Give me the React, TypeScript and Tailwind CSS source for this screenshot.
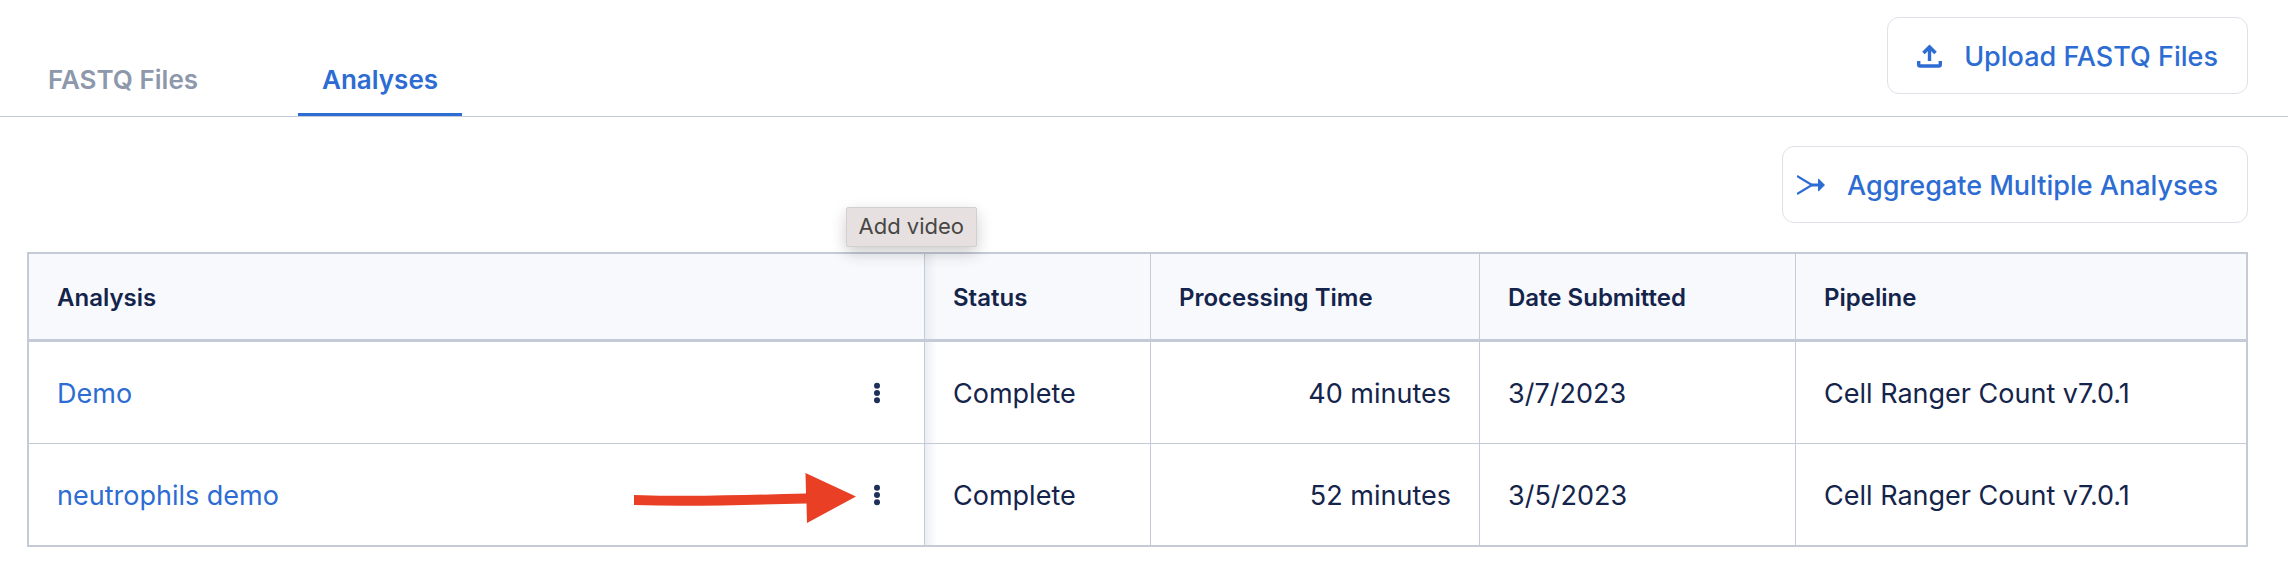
import React, {useState} from "react";

interface Analysis {
    id: number;
    name: string;
    status: string;
    processingTime: string;
    dateSubmitted: string;
    pipeline: string;
}

const analyses: Analysis[] = [
    {id: 1, name: "Demo", status: "Complete", processingTime: "40 minutes", dateSubmitted: "3/7/2023", pipeline: "Cell Ranger Count v7.0.1"},
    {id: 2, name: "neutrophils demo", status: "Complete", processingTime: "52 minutes", dateSubmitted: "3/5/2023", pipeline: "Cell Ranger Count v7.0.1"},
];

const tabs = ["FASTQ Files", "Analyses"];

const UploadIcon = () => (
    <svg width="25" height="24" viewBox="0 0 25 24" fill="none" stroke="currentColor" aria-hidden="true">
        <path d="M12.500 17V4" strokeWidth="3.400"/>
        <path d="M6.500 9L12.500 3l6 6" strokeWidth="3.600"/>
        <path d="M1.700 17v3.400a1.600 1.600 0 0 0 1.600 1.600h18.400a1.600 1.600 0 0 0 1.600-1.600V17" strokeWidth="3.400"/>
    </svg>
);

const MergeIcon = () => (
    <svg width="28" height="20" viewBox="0 0 28 20" fill="none" stroke="currentColor" aria-hidden="true">
        <path d="M0 1l15 9L0 19" strokeWidth="2.200"/>
        <path d="M14 10h10" strokeWidth="3"/>
        <path d="M21 4.500q0-1.200 1-.5l6 6-6 6q-1 .7-1-.5z" fill="currentColor" stroke="none"/>
    </svg>
);

const DotsIcon = () => (
    <svg width="6" height="22" viewBox="0 0 6 22" fill="currentColor" aria-hidden="true">
        <circle cx="3" cy="3.700" r="3"/>
        <circle cx="3" cy="11" r="3"/>
        <circle cx="3" cy="18.300" r="3"/>
    </svg>
);

const PointerArrow = () => (
    <svg
        className="absolute right-[68px] top-[29px] text-[#e93f25]"
        width="222"
        height="50"
        viewBox="0 0 222 50"
        fill="currentColor"
        aria-hidden="true"
    >
        <path d="M0 22C58 24 114 22 172 20.500L171.500 0L222 23.500L173 50L172.500 30.500C114 31.500 58 34 0 32Z"/>
    </svg>
);

export default function App() {
    const [activeTab, setActiveTab] = useState("Analyses");

    return (
        <div className="bg-white font-[Inter,sans-serif] text-[#14244b]">
            <header className="flex items-end justify-between border-b border-[#c4cad6] pl-6 pr-10">
                <nav className="flex gap-[76px]">
                    {tabs.map((tab) => (
                        <button
                            key={tab}
                            type="button"
                            onClick={() => setActiveTab(tab)}
                            className={`border-b-3 px-6 pb-[17px] text-[26px]/8 font-semibold ${
                                activeTab === tab ? "border-[#2d6cd3] text-[#2d6cd3]" : "border-transparent text-[#8d98ac]"
                            }`}
                        >
                            {tab}
                        </button>
                    ))}
                </nav>
                <button
                    type="button"
                    className="mb-[22px] mt-[17px] flex h-[77px] items-center gap-[22px] rounded-xl border border-[#dfe1e8] px-[29px] text-[27px] font-medium text-[#2d6cd3]"
                >
                    <UploadIcon/>
                    <span className="pt-[3px]">Upload FASTQ Files</span>
                </button>
            </header>

            <main className="pl-[27px] pr-10 pt-[29px]">
                <div className="flex justify-end">
                    <button
                        type="button"
                        className="flex h-[77px] items-center gap-[22px] rounded-xl border border-[#dfe1e8] pl-[14px] pr-[29px] text-[27px] font-medium text-[#2d6cd3]"
                    >
                        <MergeIcon/>
                        <span className="pt-[3px]">Aggregate Multiple Analyses</span>
                    </button>
                </div>

                <table className="mt-[29px] w-full table-fixed border-separate border-spacing-0 border-2 border-[#c4cad6] text-left">
                    <colgroup>
                        <col/>
                        <col className="w-[226px]"/>
                        <col className="w-[329px]"/>
                        <col className="w-[316px]"/>
                        <col className="w-[450px]"/>
                    </colgroup>
                    <thead>
                        <tr className="h-[88px] bg-[#f8f9fd] text-2xl [&>th]:border-b-3 [&>th]:border-[#c4cad6] [&>th]:px-7 [&>th]:pt-0.5 [&>th]:font-semibold [&>th:not(:last-child)]:border-r">
                            <th scope="col" className="relative">
                                Analysis
                                <span
                                    role="tooltip"
                                    className="absolute -right-[53px] -top-[47px] flex h-10 items-center rounded-xs border border-[#d3cfcf] bg-[#e6e0e0] px-3 text-[22px] font-normal text-[#484644] shadow-[0_6px_16px_rgba(0,0,0,0.2)]"
                                >
                                    Add video
                                </span>
                            </th>
                            <th scope="col" className="bg-linear-to-r from-[#e9ecf3] to-transparent to-[12px]">Status</th>
                            <th scope="col">Processing Time</th>
                            <th scope="col">Date Submitted</th>
                            <th scope="col">Pipeline</th>
                        </tr>
                    </thead>
                    <tbody>
                        {analyses.map((analysis, index) => (
                            <tr
                                key={analysis.id}
                                className="h-[102px] text-[27px] last:h-[101px] [&>td]:border-[#c4cad6] [&>td]:px-7 [&>td]:pt-[3px] [&>td:not(:last-child)]:border-r [&:not(:last-child)>td]:border-b"
                            >
                                <td className="relative">
                                    <div className="flex items-center justify-between">
                                        <a href="#" className="text-[#2d6cd3]">{analysis.name}</a>
                                        <button type="button" aria-label={`Actions for ${analysis.name}`} className="px-4 pb-0.5 text-[#1c3058]">
                                            <DotsIcon/>
                                        </button>
                                    </div>
                                    {index === 1 && <PointerArrow/>}
                                </td>
                                <td className="bg-linear-to-r from-[#eceef3] to-transparent to-[12px]">{analysis.status}</td>
                                <td className="text-right">{analysis.processingTime}</td>
                                <td>{analysis.dateSubmitted}</td>
                                <td>{analysis.pipeline}</td>
                            </tr>
                        ))}
                    </tbody>
                </table>
            </main>
        </div>
    );
}
